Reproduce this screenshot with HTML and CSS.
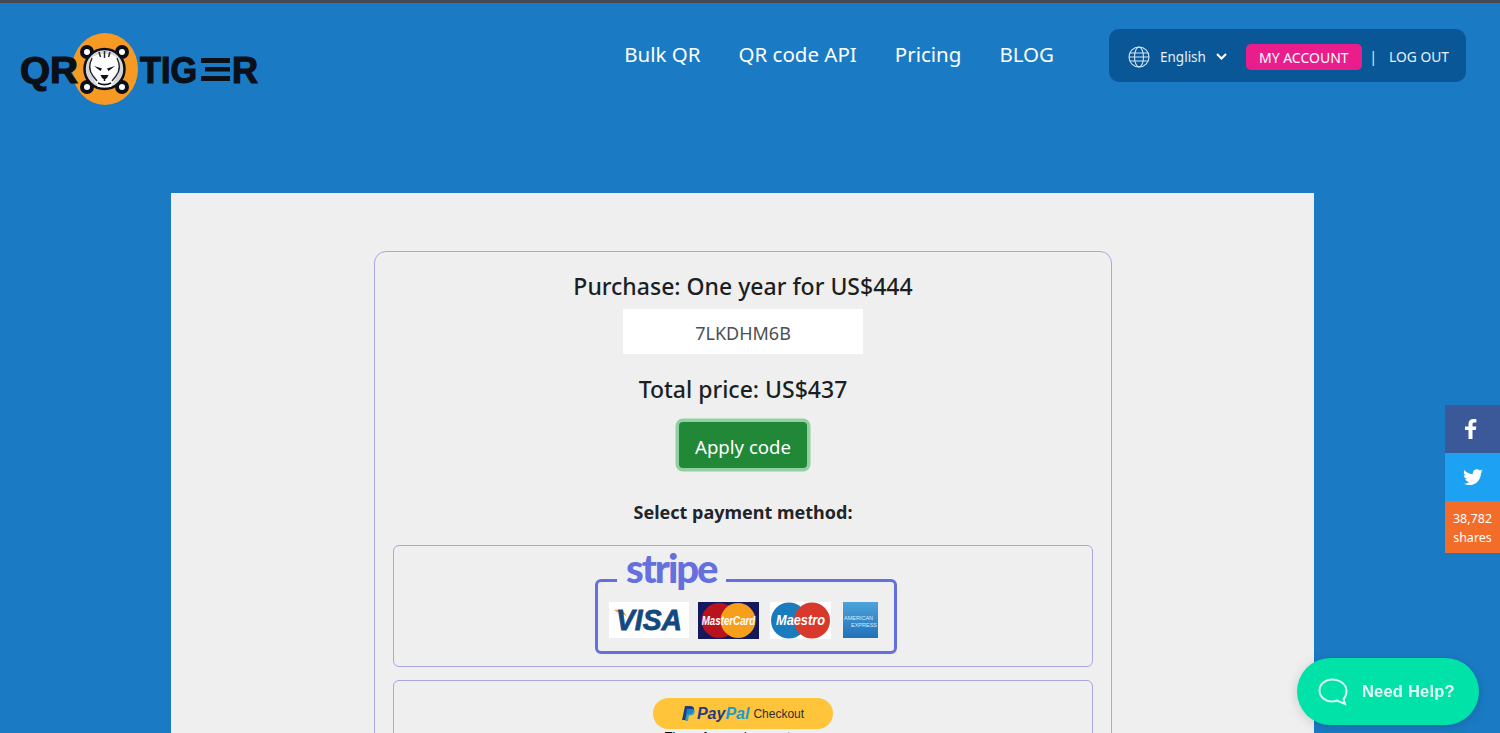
FILE: index.html
```html
<!DOCTYPE html>
<html lang="en">
<head>
    <meta charset="UTF-8">
    <title>QR TIGER - Checkout</title>
    <link rel="stylesheet" href="styles.css">
</head>
<body>
    <header class="site-header">
        <a class="logo" href="#">
            <svg width="240" height="76" viewBox="0 0 240 76">
                <ellipse cx="85" cy="38" rx="33" ry="36" fill="#f79a24"/>
                <text class="logo-text" x="0" y="52" textLength="58" lengthAdjust="spacingAndGlyphs">QR</text>
                <text class="logo-text" x="120" y="52" textLength="57" lengthAdjust="spacingAndGlyphs">TIG</text>
                <text class="logo-text" x="212" y="52" textLength="26" lengthAdjust="spacingAndGlyphs">R</text>
                <path d="M181 27h29v5h-29zM185 36h25v4.500h-25zM181 45h29v5h-29z" fill="#0a0f18"/>
                <g fill="#fff" stroke="#0a0f18" stroke-width="4">
                    <circle cx="67" cy="21" r="5"/>
                    <circle cx="102" cy="21" r="5"/>
                    <circle cx="67" cy="56" r="5"/>
                    <circle cx="102" cy="56" r="5"/>
                </g>
                <circle cx="84.500" cy="38" r="20" fill="#d4d6d7" stroke="#0a0f18" stroke-width="2.500"/>
                <path d="M70 28c7-7 22-7 29 0 2 7 1 14-3 19l-5 9H78l-5-9c-4-5-5-12-3-19z" fill="#fff"/>
                <path d="M84.500 20v7M79 21l1.500 5M90 21l-1.500 5M72 27c-3 6-3 13 1 18l4 5M97 27c3 6 3 13-1 18l-4 5" fill="none" stroke="#2a2d30" stroke-width="1.500"/>
                <path d="M74 35l8 2.500-1.500 2.500zM95 35l-8 2.500 1.500 2.500z" fill="#0a0f18"/>
                <path d="M80.500 44h8l-1.500 3-2.500 1.500-2.500-1.500z" fill="#0a0f18"/>
                <path d="M84.500 47v3M78 52c4 2 9 2 13 0" fill="none" stroke="#0a0f18" stroke-width="1.500"/>
            </svg>
        </a>
        <nav class="main-nav">
            <a href="#">Bulk QR</a>
            <a href="#">QR code API</a>
            <a href="#">Pricing</a>
            <a href="#">BLOG</a>
        </nav>
        <div class="account-box">
            <svg class="globe" width="22" height="22" viewBox="0 0 22 22" fill="none" stroke="#cfe6f7" stroke-width="1.100">
                <circle cx="11" cy="11" r="10"/>
                <ellipse cx="11" cy="11" rx="4.500" ry="10"/>
                <path d="M2 7h18M2 15h18M1 11h20"/>
            </svg>
            <span class="lang">English</span>
            <svg class="chevron" width="11" height="7" viewBox="0 0 11 7" fill="none" stroke="#fff" stroke-width="2">
                <path d="M1 1l4.500 4.500L10 1"/>
            </svg>
            <a class="my-account" href="#">MY ACCOUNT</a>
            <span class="sep">|</span>
            <a class="logout" href="#">LOG OUT</a>
        </div>
    </header>

    <main class="card">
        <section class="panel">
            <h4 class="purchase">Purchase: One year for US$444</h4>
            <input class="code-input" type="text" value="7LKDHM6B">
            <h4 class="total">Total price: US$437</h4>
            <button class="apply-btn">Apply code</button>
            <p class="select-label">Select payment method:</p>

            <div class="pay-box pay-box-stripe">
                <div class="stripe-frame">
                    <span class="stripe-word">stripe</span>
                    <svg class="mark" width="80" height="36" viewBox="0 0 80 36">
                        <rect width="80" height="36" fill="#fff"/>
                        <path d="M5 8c5-1 10 0 13 7-3-3-7-4-10-5z" fill="#e8a33a"/>
                        <text class="visa" x="7" y="28" textLength="66" lengthAdjust="spacingAndGlyphs">VISA</text>
                    </svg>
                    <svg class="mark" width="61" height="37" viewBox="0 0 61 37">
                        <rect width="61" height="37" fill="#14185c"/>
                        <circle cx="21" cy="18.500" r="17.500" fill="#b8121f"/>
                        <circle cx="40" cy="18.500" r="17.500" fill="#f79e1b"/>
                        <text class="mc" transform="translate(30.500 23) scale(.75 1)" text-anchor="middle">MasterCard</text>
                    </svg>
                    <svg class="mark maestro-mark" width="61" height="37" viewBox="0 0 61 37">
                        <rect width="61" height="37" fill="#fff"/>
                        <circle cx="19" cy="18.500" r="18" fill="#1a7cbc"/>
                        <circle cx="42" cy="18.500" r="18" fill="#d8392b"/>
                        <text class="maestro" x="30.500" y="23" text-anchor="middle" textLength="49" lengthAdjust="spacingAndGlyphs">Maestro</text>
                    </svg>
                    <svg class="mark amex" width="35" height="36" viewBox="0 0 35 36">
                        <defs>
                            <linearGradient id="amexFill" x1="0" y1="0" x2="0" y2="1">
                                <stop offset="0" stop-color="#4ea3da"/>
                                <stop offset="1" stop-color="#2171b8"/>
                            </linearGradient>
                        </defs>
                        <rect width="35" height="36" fill="url(#amexFill)"/>
                        <text class="amex-text" x="1" y="18">AMERICAN</text>
                        <text class="amex-text" x="8" y="25">EXPRESS</text>
                    </svg>
                </div>
            </div>

            <div class="pay-box pay-box-paypal">
                <a class="paypal-btn" href="#">
                    <svg width="13" height="15" viewBox="0 0 13 15">
                        <path d="M3 0h5c3 0 4.500 1.500 4 4-.5 3-2.500 4.500-5.500 4.500H5L4 14H0z" fill="#253b80"/>
                        <path d="M5 3h5c2 0 3 1 2.700 3-.5 2.500-2 3.500-4.500 3.500H7L6 15H3z" fill="#179bd7" opacity=".8"/>
                    </svg>
                    <span class="pp-word"><span class="pp-pay">Pay</span><span class="pp-pal">Pal</span></span>
                    <span class="pp-checkout">Checkout</span>
                </a>
                <p class="pp-tagline">The safer, easier way to pay</p>
            </div>
        </section>
    </main>

    <aside class="share-bar">
        <a class="share-fb" href="#">
            <svg width="12" height="20" viewBox="0 0 12 20"><path d="M3.500 20v-9H0V7.500h3.500V5c0-3.300 2-5 4.900-5 1.400 0 2.600.1 3 .2v3.300H9.300C7.800 3.500 7.500 4.300 7.500 5.400v2.100h3.800l-.5 3.500H7.500v9z" fill="#fff"/></svg>
        </a>
        <a class="share-tw" href="#">
            <svg width="20" height="17" viewBox="0 0 24 20"><path d="M24 2.400c-.9.400-1.800.7-2.800.8 1-.6 1.800-1.600 2.200-2.700-1 .6-2 1-3.100 1.200C19.300.7 18 0 16.600 0c-2.700 0-4.900 2.200-4.900 4.900 0 .4 0 .8.100 1.100C7.700 5.800 4.100 3.900 1.700.9c-.4.700-.7 1.600-.7 2.500 0 1.700.9 3.200 2.200 4.100-.8 0-1.600-.2-2.200-.6v.1c0 2.400 1.700 4.400 3.900 4.800-.4.100-.8.200-1.300.2-.3 0-.6 0-.9-.1.600 2 2.400 3.400 4.600 3.400-1.700 1.300-3.800 2.100-6.100 2.100-.4 0-.8 0-1.200-.1C2.200 18.300 4.800 19.100 7.500 19.100c9.100 0 14-7.500 14-14v-.6c1-.7 1.800-1.500 2.500-2.100z" fill="#fff"/></svg>
        </a>
        <div class="share-count">38,782<br>shares</div>
    </aside>

    <a class="help-btn" href="#">
        <svg width="30" height="28" viewBox="0 0 30 28" fill="none" stroke="#d6fbf0" stroke-width="2">
            <path d="M14 1.500C7 1.500 1.500 6.500 1.500 12.500S7 23.500 14 23.500c2 0 3.500-.3 5-1l8 3.500-1.500-5c2-2 3-4.500 3-8C28.500 6.500 22 1.500 14 1.500z"/>
        </svg>
        <span>Need Help?</span>
    </a>
</body>
</html>
```

FILE: styles.css
```css
* {
    box-sizing: border-box;
}
html, body {
    height: 100%;
    overflow: hidden;
}
body {
    margin: 0;
    font-family: "Noto Sans", Arial, sans-serif;
    color: #212529;
    background: #1a7bc4;
    border-top: 3px solid #464a52;
}
a {
    color: inherit;
    text-decoration: none;
}

/* header */
.site-header {
    display: flex;
    align-items: flex-start;
    height: 190px;
    padding: 26px 34px 0 20px;
}
.logo {
    display: block;
    margin-top: 2px;
}
.logo-text {
    font-family: "Liberation Sans", Arial, sans-serif;
    font-weight: 700;
    font-size: 36px;
    fill: #0a0f18;
    stroke: #0a0f18;
    stroke-width: 1.2px;
}
.main-nav {
    display: flex;
    gap: 38px;
    margin-left: auto;
    margin-top: 10px;
    color: #fff;
    font-size: 20.500px;
    line-height: 30px;
    white-space: nowrap;
}
.account-box {
    display: flex;
    align-items: center;
    width: 357px;
    height: 53px;
    margin-left: 55px;
    padding: 2px 17px 0 19px;
    background: #0a5798;
    border-radius: 10px;
    color: #e6f2fb;
    font-size: 13.500px;
    white-space: nowrap;
}
.lang {
    margin-left: 10px;
}
.chevron {
    margin-left: 10px;
}
.my-account {
    margin-left: 19px;
    padding: 0 13px;
    height: 26px;
    font-size: 14px;
    line-height: 27px;
    background: #e91e8c;
    border-radius: 5px;
    color: #fff;
}
.sep {
    margin-left: 8px;
}
.logout {
    margin-left: auto;
    font-size: 13.800px;
}

/* main card */
.card {
    width: 1143px;
    min-height: 600px;
    margin-left: 171px;
    padding-top: 58px;
    background: #efefef;
}
.panel {
    display: flex;
    flex-direction: column;
    align-items: center;
    width: 738px;
    margin-left: 203px;
    padding: 18px 18px 20px;
    border: 1px solid #a9a7e2;
    border-radius: 12px;
}
.purchase, .total {
    margin: 0;
    color: #1b1f23;
    font-size: 23px;
    font-weight: 500;
    line-height: 32px;
}
.code-input {
    width: 240px;
    height: 45px;
    margin: 7px 0 19px;
    padding: 2px 0 0;
    border: 0;
    background: #fff;
    color: #495057;
    font-family: inherit;
    font-size: 18px;
    text-align: center;
}
.apply-btn {
    width: 128px;
    height: 46px;
    margin-top: 17px;
    padding: 2px 0 0;
    border: 0;
    border-radius: 4px;
    background: #218838;
    box-shadow: 0 0 0 3.500px #92cfa1;
    color: #fff;
    font-family: inherit;
    font-size: 18.600px;
}
.select-label {
    margin: 31px 0 20px;
    font-size: 18px;
    font-weight: 700;
    line-height: 26px;
}
.pay-box {
    display: flex;
    flex-direction: column;
    align-items: center;
    width: 100%;
    border: 1px solid #a9a7e2;
    border-radius: 6px;
}
.pay-box-stripe {
    height: 122px;
    padding-top: 33px;
    margin-bottom: 13px;
}
.pay-box-paypal {
    padding-top: 17px;
    height: 120px;
}

/* stripe */
.stripe-frame {
    position: relative;
    display: flex;
    align-items: center;
    gap: 9px;
    width: 302px;
    height: 75px;
    margin-left: 6px;
    padding: 7px 0 0 11px;
    border: 3px solid #6570de;
    border-radius: 6px;
}
.stripe-word {
    position: absolute;
    left: 19px;
    top: -39px;
    padding: 0 9px;
    background: linear-gradient(to bottom, transparent 60%, #efefef 60%);
    color: #6570de;
    font-family: Lato, sans-serif;
    font-weight: 900;
    font-size: 40px;
    line-height: 50px;
    letter-spacing: -2px;
}
.mark {
    display: block;
}
.maestro-mark {
    margin-left: 2px;
}
.amex {
    margin-left: 3px;
}
.visa {
    font-family: "Liberation Sans", sans-serif;
    font-weight: 700;
    font-style: italic;
    font-size: 30px;
    fill: #14487f;
    stroke: #14487f;
    stroke-width: 0.8px;
}
.mc {
    font-family: "Liberation Sans", sans-serif;
    font-weight: 700;
    font-style: italic;
    font-size: 13px;
    fill: #fff;
}
.maestro {
    font-family: "Liberation Sans", sans-serif;
    font-weight: 700;
    font-style: italic;
    font-size: 14px;
    fill: #fff;
}
.amex-text {
    font-family: "Liberation Sans", sans-serif;
    font-size: 5.500px;
    fill: #dcecf7;
}

/* paypal */
.paypal-btn {
    display: flex;
    align-items: center;
    justify-content: center;
    width: 180px;
    height: 31px;
    background: #ffc43a;
    border-radius: 16px;
    color: #2c2e2f;
}
.pp-word {
    margin-left: 2px;
    font-family: "Liberation Sans", sans-serif;
    font-weight: 700;
    font-style: italic;
    font-size: 16px;
}
.pp-pay {
    color: #253b80;
}
.pp-pal {
    color: #179bd7;
}
.pp-checkout {
    margin-left: 4px;
    font-family: "Liberation Sans", sans-serif;
    font-size: 12px;
}
.pp-tagline {
    margin: 1px 0 0;
    color: #000;
    font-family: "Liberation Sans", sans-serif;
    font-size: 12.500px;
    line-height: 14px;
}

/* floating */
.share-bar {
    position: fixed;
    right: 0;
    top: 405px;
    width: 55px;
    color: #fff;
}
.share-fb, .share-tw {
    display: flex;
    align-items: center;
    justify-content: center;
    height: 48px;
}
.share-fb {
    background: #3b5998;
    padding-right: 3px;
}
.share-tw {
    background: #1da1f2;
}
.share-count {
    height: 52px;
    padding-top: 8px;
    background: #f26c2a;
    font-size: 12.500px;
    line-height: 19px;
    text-align: center;
}
.help-btn {
    position: fixed;
    left: 1297px;
    top: 658px;
    display: flex;
    align-items: center;
    gap: 14px;
    width: 182px;
    height: 67px;
    padding-left: 21px;
    background: #00e2a8;
    border-radius: 34px;
    box-shadow: 0 2px 12px rgba(0,0,0,0.15);
    color: #e4fcf5;
    font-family: "Liberation Sans", sans-serif;
    font-weight: 700;
    font-size: 16.500px;
    letter-spacing: 0.2px;
}
```
